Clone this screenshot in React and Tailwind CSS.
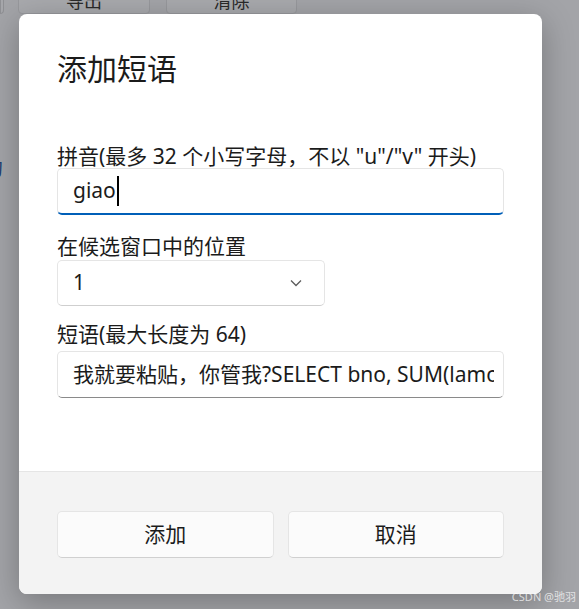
import React from 'react';

const font = { fontFamily: '"Noto Sans", "Noto Sans CJK SC", sans-serif' };

const App = () => {
  return (
    <div className="relative w-[579px] h-[609px] overflow-hidden bg-[#a3a4a8] text-[#1b1b1b]" style={font}>
      {/* app behind the dialog */}
      <div className="flex items-end -mt-[20px] h-[34px]">
        <div className="w-[4px] h-full rounded-br-[4px] border border-[#8f9094] bg-[#a6a7ab]" />
        <div className="ml-[14px] w-[132px] h-full rounded-b-[4px] border border-[#97989c] bg-[#a8a9ad] flex items-end justify-center text-[18px] leading-[24px] text-[#2a2a2a]">导出</div>
        <div className="ml-[16px] w-[131px] h-full rounded-b-[4px] border border-[#97989c] bg-[#a8a9ad] flex items-end justify-center text-[18px] leading-[24px] text-[#2a2a2a]">清除</div>
      </div>
      <div className="-ml-[15px] mt-[142px] text-[18px] leading-[24px] text-[#1c3d70]">句</div>

      {/* dialog */}
      <div className="absolute left-[19px] top-[14px] w-[523px] h-[580px] rounded-[8px] bg-white overflow-hidden flex flex-col shadow-[0_8px_32px_rgba(0,0,0,0.28)]">
        <div className="flex-1 px-[38px] pt-[37px]">
          <div className="text-[30px] leading-[36px]">添加短语</div>

          <div className="mt-[57px] text-[21px] leading-[24px] whitespace-nowrap">拼音(最多 32 个小写字母，不以 "u"/"v" 开头)</div>
          <div className="h-[47px] rounded-[5px] border border-[#e5e5e5] border-b-2 border-b-[#005fb8] flex items-center pl-[15px] text-[21px]">
            <span>giao</span>
            <span className="ml-[1px] w-[2px] h-[30px] bg-black" />
          </div>

          <div className="mt-[19px] text-[21px] leading-[24px]">在候选窗口中的位置</div>
          <div className="mt-[2px] w-[268px] h-[46px] rounded-[5px] border border-[#e5e5e5] border-b-[#cfcfcf] flex items-center justify-between pl-[15px] pr-[22px] text-[21px]">
            <span>1</span>
            <svg width="12" height="8" viewBox="0 0 12 8" fill="none">
              <polyline points="1,1.5 6,6.5 11,1.5" stroke="#5c5c5c" strokeWidth="1.3" />
            </svg>
          </div>

          <div className="mt-[16px] text-[21px] leading-[24px]">短语(最大长度为 64)</div>
          <div className="mt-[5px] h-[47px] rounded-[5px] border border-[#e5e5e5] border-b-[#8a8a8a] flex items-center pl-[15px] pr-[9px] text-[21px]">
            <span className="block overflow-hidden whitespace-nowrap">我就要粘贴，你管我?SELECT bno, SUM(lamount) FROM loan GROUP BY bno</span>
          </div>
        </div>

        <div className="h-[123px] border-t border-[#e5e5e5] bg-[#f3f3f3] px-[38px] pt-[39px] flex gap-[14px]">
          <div className="flex-1 h-[47px] rounded-[5px] border border-[#e5e5e5] border-b-[#d0d0d0] bg-[#fbfbfb] flex items-center justify-center text-[21px]">添加</div>
          <div className="flex-1 h-[47px] rounded-[5px] border border-[#e5e5e5] border-b-[#d0d0d0] bg-[#fbfbfb] flex items-center justify-center text-[21px]">取消</div>
        </div>
      </div>

      {/* watermark */}
      <div className="absolute right-[3px] bottom-[5px] text-[11px] leading-[14px] text-white/70">CSDN @驰羽</div>
    </div>
  );
};

export default App;
